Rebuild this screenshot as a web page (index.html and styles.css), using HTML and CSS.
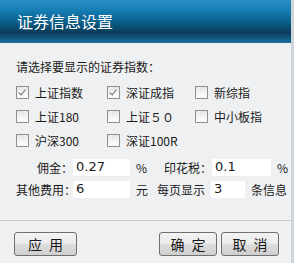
FILE: index.html
```html
<!DOCTYPE html>
<html>
<head>
    <title>证券信息设置</title>
    <link rel="stylesheet" href="styles.css">
</head>
<body>
<div class="dialog">
    <div class="titlebar">证券信息设置</div>

    <div class="content">
        <div class="prompt">请选择要显示的证券指数：</div>

        <div class="grid">
            <label class="chk"><span class="box on"></span>上证指数</label>
            <label class="chk"><span class="box on"></span>深证成指</label>
            <label class="chk"><span class="box"></span>新综指</label>

            <label class="chk"><span class="box"></span>上证180</label>
            <label class="chk"><span class="box"></span>上证５０</label>
            <label class="chk"><span class="box"></span>中小板指</label>

            <label class="chk"><span class="box"></span>沪深300</label>
            <label class="chk"><span class="box"></span>深证100R</label>
        </div>

        <div class="fees">
            <div class="row">
                <span class="lbl lbl-a">佣金：</span>
                <span class="field w57">0.27</span>
                <span class="unit">%</span>
                <span class="lbl lbl-b">印花税：</span>
                <span class="field w59">0.1</span>
                <span class="unit">%</span>
            </div>
            <div class="row">
                <span class="lbl lbl-a">其他费用：</span>
                <span class="field w57">6</span>
                <span class="unit">元</span>
                <span class="lbl lbl-c">每页显示</span>
                <span class="field w34">3</span>
                <span class="unit">条信息</span>
            </div>
        </div>
    </div>

    <div class="buttons">
        <button class="btn">应&ensp;用</button>
        <div class="right">
            <button class="btn">确&ensp;定</button>
            <button class="btn">取&ensp;消</button>
        </div>
    </div>
</div>
</body>
</html>
```

FILE: styles.css
```css
body {
    margin: 0;
    font-family: "Noto Sans CJK SC", "DejaVu Sans", sans-serif;
    background: #e9ecee;
}

.dialog {
    width: 291px;
    height: 263px;
    background: #eff0f1;
    border-right: 3px solid #cfd5d9;
    box-sizing: content-box;
    display: flex;
    flex-direction: column;
}

.titlebar {
    height: 43px;
    line-height: 43px;
    padding-left: 17px;
    color: #ffffff;
    font-size: 16px;
    background: linear-gradient(#2a8fc4 0%, #147db3 25%, #0b5a84 55%, #0a3c5a 75%, #1a6e9b 100%);
}

.content {
    padding: 14px 0 0 16px;
    font-size: 12px;
    color: #1a1a1a;
    white-space: nowrap;
}

.prompt {
    height: 20px;
    line-height: 20px;
}

.grid {
    display: grid;
    grid-template-columns: 91px 88px 90px;
    row-gap: 8px;
    margin-top: 7px;
}

.chk {
    display: flex;
    align-items: center;
    height: 16px;
}

.box {
    flex-shrink: 0;
    width: 11px;
    height: 11px;
    border: 1px solid #8e8f8f;
    background: linear-gradient(#e6e6e6, #ffffff);
    margin-right: 6px;
    position: relative;
}

.box.on::after {
    content: "";
    position: absolute;
    left: 3px;
    top: 1px;
    width: 3px;
    height: 6px;
    border-right: 1px solid #6f6f6f;
    border-bottom: 1px solid #6f6f6f;
    transform: rotate(40deg);
}

.fees {
    margin-top: 8px;
}

.row {
    display: flex;
    align-items: center;
    height: 22px;
}

.row > span {
    flex-shrink: 0;
}

.lbl-a {
    width: 57px;
    text-align: right;
}

.lbl-b {
    width: 48px;
    margin-left: 17px;
}

.lbl-c {
    margin-left: 9px;
    width: 54px;
}

.field {
    height: 17px;
    line-height: 15px;
    background: #ffffff;
    padding-left: 3px;
    box-sizing: border-box;
    font-family: "DejaVu Sans", sans-serif;
    font-size: 13px;
}

.w57 { width: 57px; }
.w59 { width: 59px; }
.w34 { width: 34px; }

.unit {
    margin-left: 6px;
}

.buttons {
    margin-top: auto;
    border-top: 1px solid #c8cbcd;
    display: flex;
    justify-content: space-between;
    padding: 11px 12px 7px 14px;
    height: 24px;
}

.right {
    display: flex;
    gap: 4px;
}

.btn {
    width: 63px;
    height: 24px;
    font-family: "Noto Sans CJK SC", sans-serif;
    font-size: 14px;
    color: #1a1a1a;
    border: 1px solid #707070;
    border-radius: 3px;
    background: linear-gradient(#f2f2f2 0%, #ebebeb 50%, #dddddd 51%, #cfcfcf 100%);
    padding: 0;
}

.right .btn {
    width: 58px;
}
```
